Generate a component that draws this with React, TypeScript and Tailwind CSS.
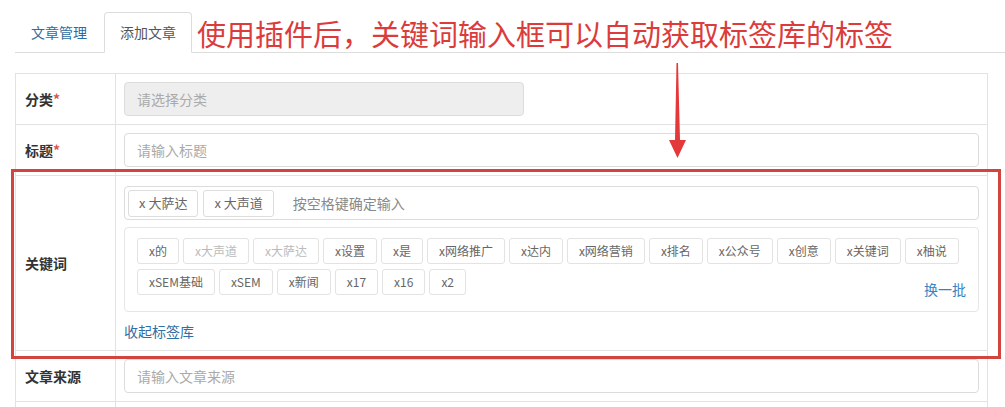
import React from 'react';

const libraryTags: { label: string; used?: boolean }[] = [
  { label: 'x的' },
  { label: 'x大声道', used: true },
  { label: 'x大萨达', used: true },
  { label: 'x设置' },
  { label: 'x是' },
  { label: 'x网络推广' },
  { label: 'x达内' },
  { label: 'x网络营销' },
  { label: 'x排名' },
  { label: 'x公众号' },
  { label: 'x创意' },
  { label: 'x关键词' },
  { label: 'x柚说' },
  { label: 'xSEM基础' },
  { label: 'xSEM' },
  { label: 'x新闻' },
  { label: 'x17' },
  { label: 'x16' },
  { label: 'x2' },
];

const selectedTags = ['x 大萨达', 'x 大声道'];

function Row({
  label,
  required,
  children,
}: {
  label?: string;
  required?: boolean;
  children?: React.ReactNode;
}) {
  return (
    <div className="flex border-b border-[#e2e2e2]">
      <div className="flex w-[100px] shrink-0 items-center border-r border-[#e2e2e2] pl-[9px] text-[14px] font-bold text-[#333]">
        {label}
        {required && <span className="text-[#d9534f]">*</span>}
      </div>
      <div className="min-w-0 flex-1 px-[8px] py-[8px]">{children}</div>
    </div>
  );
}

function TextInput({ placeholder }: { placeholder: string }) {
  return (
    <div className="flex h-[34px] items-center rounded-[4px] border border-[#dcdcdc] px-3 text-[14px] text-[#aaa]">
      {placeholder}
    </div>
  );
}

export default function App() {
  return (
    <div className="relative h-[407px] w-[1005px] overflow-hidden bg-white font-['Noto_Sans_CJK_SC','Noto_Sans',sans-serif] text-[#333]">
      {/* tabs */}
      <div className="pl-[15px] pt-3">
        <div className="flex h-[41px] items-end border-b border-[#dddddd]">
          <div className="px-4 pb-[10px] text-[14px] leading-5 text-[#2d6ca2]">文章管理</div>
          <div className="-mb-px ml-[1px] rounded-t-[4px] border border-[#dddddd] border-b-white bg-white px-[15px] pb-[10px] pt-[9px] text-[14px] leading-5 text-[#555]">
            添加文章
          </div>
        </div>
      </div>

      {/* form table */}
      <div className="ml-[15px] mt-5 w-[973px] border-l border-r border-t border-[#e2e2e2]">
        <Row label="分类" required>
          <div className="flex h-[34px] w-[400px] items-center rounded-[4px] border border-[#dcdcdc] bg-[#eeeeee] px-3 text-[14px] text-[#aaa]">
            请选择分类
          </div>
        </Row>
        <Row label="标题" required>
          <TextInput placeholder="请输入标题" />
        </Row>
        <Row label="关键词">
          <div className="pt-[2px]">
            <div className="flex h-[34px] items-center gap-[5px] rounded-[4px] border border-[#dcdcdc] pl-[3px]">
              {selectedTags.map((t) => (
                <span
                  key={t}
                  className="flex h-[27px] items-center rounded-[3px] border border-[#dddddd] px-[10px] text-[13px] text-[#666]"
                >
                  {t}
                </span>
              ))}
              <span className="ml-[14px] text-[14px] text-[#888]">按空格键确定输入</span>
            </div>
            <div className="mt-[7px] flex flex-wrap gap-x-[4px] gap-y-[5px] rounded-[4px] border border-[#e6e6e6] pb-[16px] pl-[12px] pr-[12px] pt-[10px]">
              {libraryTags.map((t) => (
                <span
                  key={t.label}
                  className={
                    'flex h-[26px] items-center rounded-[3px] border border-[#e3e3e3] px-[11px] text-[12px] ' +
                    (t.used ? 'text-[#bbbbbb]' : 'text-[#666]')
                  }
                >
                  {t.label}
                </span>
              ))}
              <span className="ml-auto h-[26px] self-end text-[14px] leading-[40px] text-[#3a83c0]">换一批</span>
            </div>
            <div className="pb-[1px] pt-[9px] text-[14px] leading-5 text-[#2f6fa6]">收起标签库</div>
          </div>
        </Row>
        <Row label="文章来源">
          <TextInput placeholder="请输入文章来源" />
        </Row>
        <Row>
          <div className="h-[34px]" />
        </Row>
      </div>

      {/* annotation overlay */}
      <div className="absolute left-[197px] top-[13px] whitespace-nowrap text-[29px] leading-[40px] text-[#dc3b3b]">
        使用插件后，关键词输入框可以自动获取标签库的标签
      </div>
      <svg className="absolute left-0 top-0" width="1005" height="407" viewBox="0 0 1005 407">
        <polygon
          points="676.5,63 678,63 680,140 686,140 677.5,158 669,140 675,140"
          fill="#e3393b"
        />
      </svg>
      <div className="absolute left-[11px] top-[169px] h-[190px] w-[990px] border-[3px] border-[#d4443f]" />
    </div>
  );
}
